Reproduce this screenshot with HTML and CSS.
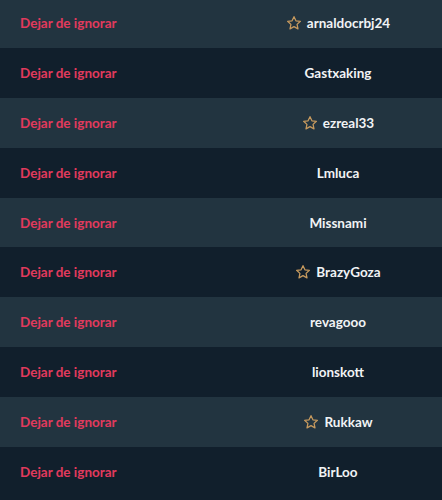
FILE: index.html
```html
<!DOCTYPE html>
<html>
<head>
<meta charset="utf-8">
<link rel="stylesheet" href="styles.css">
</head>
<body>
<div class="list">
  <div class="row alt"><a class="unignore">Dejar de ignorar</a><span class="user"><svg class="star" viewBox="0 0 24 24"><path d="M12 2.5l2.9 6.2 6.7.8-5 4.6 1.4 6.7L12 17.4l-6 3.4 1.4-6.7-5-4.6 6.7-.8z"/></svg>arnaldocrbj24</span></div>
  <div class="row"><a class="unignore">Dejar de ignorar</a><span class="user">Gastxaking</span></div>
  <div class="row alt"><a class="unignore">Dejar de ignorar</a><span class="user"><svg class="star" viewBox="0 0 24 24"><path d="M12 2.5l2.9 6.2 6.7.8-5 4.6 1.4 6.7L12 17.4l-6 3.4 1.4-6.7-5-4.6 6.7-.8z"/></svg>ezreal33</span></div>
  <div class="row"><a class="unignore">Dejar de ignorar</a><span class="user">Lmluca</span></div>
  <div class="row alt"><a class="unignore">Dejar de ignorar</a><span class="user">Missnami</span></div>
  <div class="row"><a class="unignore">Dejar de ignorar</a><span class="user"><svg class="star" viewBox="0 0 24 24"><path d="M12 2.5l2.9 6.2 6.7.8-5 4.6 1.4 6.7L12 17.4l-6 3.4 1.4-6.7-5-4.6 6.7-.8z"/></svg>BrazyGoza</span></div>
  <div class="row alt"><a class="unignore">Dejar de ignorar</a><span class="user">revagooo</span></div>
  <div class="row"><a class="unignore">Dejar de ignorar</a><span class="user">lionskott</span></div>
  <div class="row alt"><a class="unignore">Dejar de ignorar</a><span class="user"><svg class="star" viewBox="0 0 24 24"><path d="M12 2.5l2.9 6.2 6.7.8-5 4.6 1.4 6.7L12 17.4l-6 3.4 1.4-6.7-5-4.6 6.7-.8z"/></svg>Rukkaw</span></div>
  <div class="row"><a class="unignore">Dejar de ignorar</a><span class="user">BirLoo</span></div>
</div>
</body>
</html>
```
FILE: styles.css
```css
html, body {
  margin: 0;
  padding: 0;
  background: #111f2c;
  overflow: hidden;
}
.list {
  margin-top: -2px;
  font-family: Lato, "Liberation Sans", sans-serif;
  font-weight: 700;
  font-size: 13.5px;
}
.row {
  height: 49.9px;
  display: grid;
  grid-template-columns: 234px 1fr;
  align-items: center;
  background: #111f2c;
}
.row.alt {
  background: #223440;
}
.unignore {
  color: #e23a5d;
  padding-left: 20px;
}
.user {
  color: #f1f3f5;
  display: flex;
  align-items: center;
  justify-content: center;
  gap: 5px;
}
.star {
  width: 16px;
  height: 16px;
  fill: none;
  stroke: #c79a5e;
  stroke-width: 1.9;
  stroke-linejoin: round;
}
```
